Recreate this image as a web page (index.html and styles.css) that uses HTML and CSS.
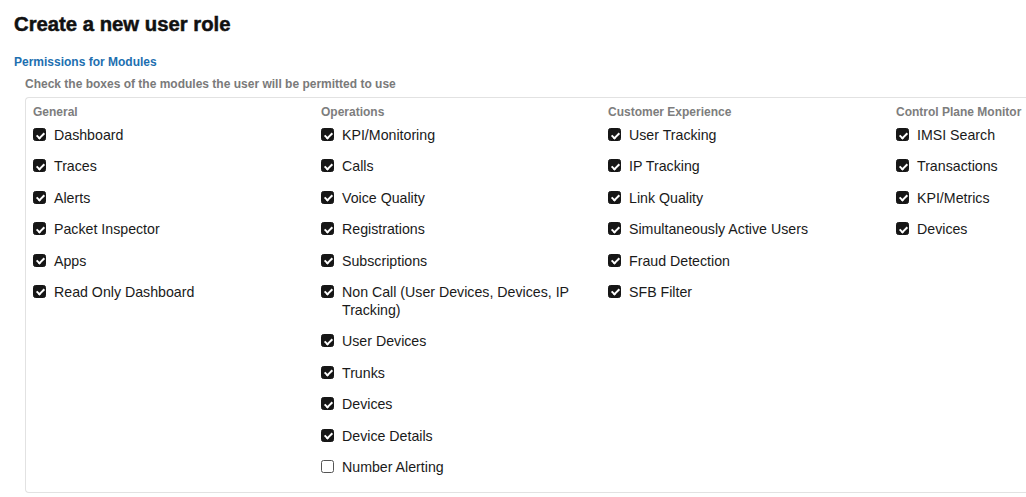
FILE: index.html
```html
<!DOCTYPE html>
<html>
<head>
<meta charset="utf-8">
<link rel="stylesheet" href="styles.css">
</head>
<body>
<div class="page">
  <h1 class="title">Create a new user role</h1>
  <h2 class="section">Permissions for Modules</h2>
  <p class="hint">Check the boxes of the modules the user will be permitted to use</p>
  <div class="panel">
    <div class="col">
      <div class="col-head">General</div>
      <label class="item"><span class="cb on"></span><span>Dashboard</span></label>
      <label class="item"><span class="cb on"></span><span>Traces</span></label>
      <label class="item"><span class="cb on"></span><span>Alerts</span></label>
      <label class="item"><span class="cb on"></span><span>Packet Inspector</span></label>
      <label class="item"><span class="cb on"></span><span>Apps</span></label>
      <label class="item"><span class="cb on"></span><span>Read Only Dashboard</span></label>
    </div>
    <div class="col">
      <div class="col-head">Operations</div>
      <label class="item"><span class="cb on"></span><span>KPI/Monitoring</span></label>
      <label class="item"><span class="cb on"></span><span>Calls</span></label>
      <label class="item"><span class="cb on"></span><span>Voice Quality</span></label>
      <label class="item"><span class="cb on"></span><span>Registrations</span></label>
      <label class="item"><span class="cb on"></span><span>Subscriptions</span></label>
      <label class="item"><span class="cb on"></span><span>Non Call (User Devices, Devices, IP Tracking)</span></label>
      <label class="item"><span class="cb on"></span><span>User Devices</span></label>
      <label class="item"><span class="cb on"></span><span>Trunks</span></label>
      <label class="item"><span class="cb on"></span><span>Devices</span></label>
      <label class="item"><span class="cb on"></span><span>Device Details</span></label>
      <label class="item"><span class="cb"></span><span>Number Alerting</span></label>
    </div>
    <div class="col">
      <div class="col-head">Customer Experience</div>
      <label class="item"><span class="cb on"></span><span>User Tracking</span></label>
      <label class="item"><span class="cb on"></span><span>IP Tracking</span></label>
      <label class="item"><span class="cb on"></span><span>Link Quality</span></label>
      <label class="item"><span class="cb on"></span><span>Simultaneously Active Users</span></label>
      <label class="item"><span class="cb on"></span><span>Fraud Detection</span></label>
      <label class="item"><span class="cb on"></span><span>SFB Filter</span></label>
    </div>
    <div class="col">
      <div class="col-head">Control Plane Monitor</div>
      <label class="item"><span class="cb on"></span><span>IMSI Search</span></label>
      <label class="item"><span class="cb on"></span><span>Transactions</span></label>
      <label class="item"><span class="cb on"></span><span>KPI/Metrics</span></label>
      <label class="item"><span class="cb on"></span><span>Devices</span></label>
    </div>
  </div>
</div>
</body>
</html>
```
FILE: styles.css
```css
html, body {
  margin: 0;
  padding: 0;
  background: #ffffff;
  overflow: hidden;
}
body {
  font-family: "Liberation Sans", Arial, sans-serif;
  color: #1a1a1a;
}
.page {
  padding: 12px 0 0 14px;
  width: 1012px;
}
.title {
  margin: 0;
  font-size: 20.3px;
  line-height: 24px;
  font-weight: bold;
  color: #111111;
  -webkit-text-stroke: 0.5px #111111;
}
.section {
  margin: 18px 0 0 0;
  font-size: 12px;
  line-height: 16px;
  font-weight: bold;
  color: #1d6fb0;
}
.hint {
  margin: 6px 0 0 11px;
  font-size: 12px;
  line-height: 16px;
  font-weight: bold;
  color: #7a7a7a;
}
.panel {
  margin: 5px 0 0 11px;
  border: 1px solid #e2e2e2;
  border-right: none;
  border-radius: 4px 0 0 4px;
  padding: 6px 0 16px 7px;
  display: grid;
  grid-template-columns: 288px 287px 288px 1fr;
  align-items: start;
  height: 372px;
}
.col {
  display: flex;
  flex-direction: column;
  gap: 13.4px;
}
.col-head {
  font-size: 12px;
  line-height: 16px;
  font-weight: bold;
  color: #7d7d7d;
  margin-bottom: -7.4px;
  white-space: nowrap;
}
.item {
  display: flex;
  align-items: flex-start;
  gap: 8px;
  font-size: 14.2px;
  line-height: 18px;
  color: #1a1a1a;
  padding-right: 12px;
}
.cb {
  flex: none;
  width: 13px;
  height: 13px;
  margin-top: 2px;
  box-sizing: border-box;
  border-radius: 2.5px;
  border: 1px solid #555;
  background: #fff;
  position: relative;
}
.cb.on {
  background: #161616;
  border-color: #161616;
}
.cb.on::after {
  content: "";
  position: absolute;
  left: 3.5px;
  top: 1.5px;
  width: 3px;
  height: 6px;
  border: solid #fff;
  border-width: 0 2px 2px 0;
  transform: rotate(45deg);
}
```
